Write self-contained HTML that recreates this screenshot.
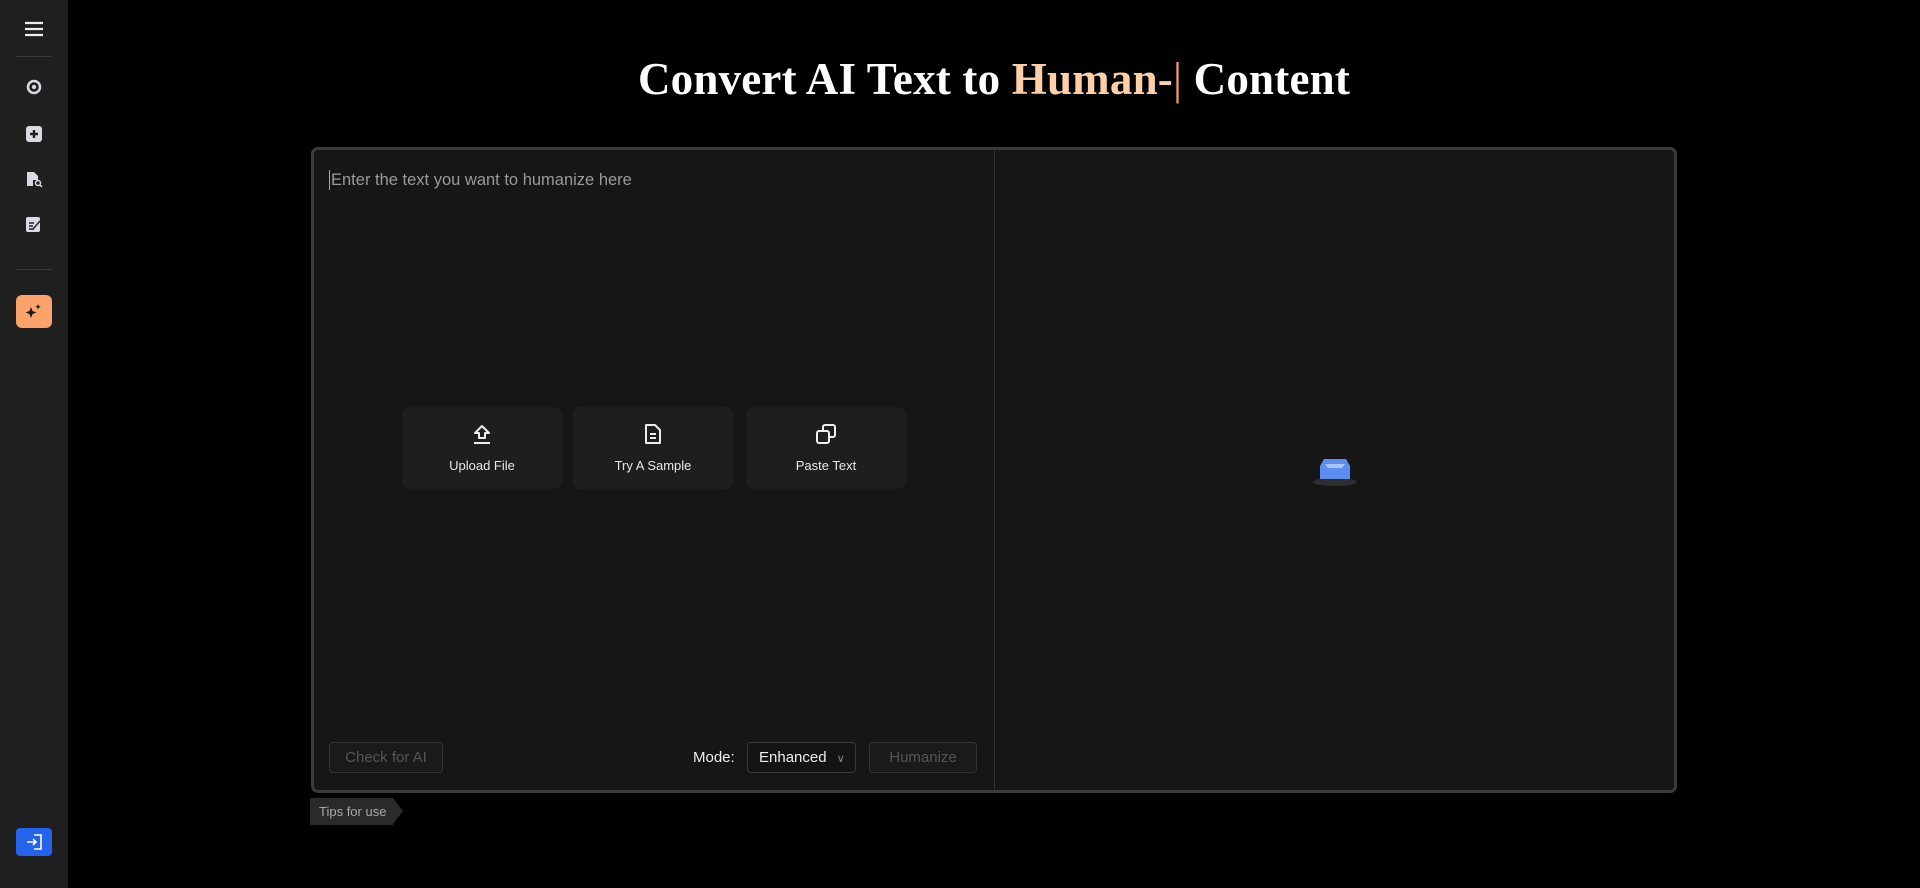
<!DOCTYPE html>
<html><head><meta charset="utf-8"><style>
*{box-sizing:border-box;margin:0;padding:0}
body{width:1920px;height:888px;background:#000;font-family:"Liberation Sans",sans-serif;position:relative;overflow:hidden;color:#fff}
.sb{position:absolute;left:0;top:0;width:68px;height:888px;background:#1f1f1f}
.hr{position:absolute;left:16px;width:36px;height:1px;background:#3a3a3a}
.ic{position:absolute;left:24px}
.title{position:absolute;left:0;right:0;padding-left:68px;top:53px;text-align:center;font-family:"Liberation Serif",serif;font-weight:bold;font-size:45px;letter-spacing:0.2px}
.box{position:absolute;left:311px;top:147px;width:1366px;height:646px;border:3px solid #3a3a3a;border-radius:7px;background:#161616}
.div{position:absolute;left:680px;top:0;width:1px;height:100%;background:#333}
.ph{position:absolute;left:15px;top:20px;font-size:16.5px;color:#9a9a9a;border-left:1px solid #aaa;padding-left:1px;line-height:20px}
.card{position:absolute;top:257px;width:160px;height:82px;background:#1e1e1e;border-radius:8px;text-align:center;font-size:13px;color:#e8e8e8}
.card svg{margin-top:16px}
.card div{margin-top:10px}
.btn{position:absolute;top:592px;height:31px;border:1px solid #333;border-radius:4px;color:#555;font-size:15px;line-height:29px;text-align:center;background:#1a1a1a}
</style></head><body>
<div class="sb">
<svg class="ic" style="top:20px;left:24px" width="20" height="18" viewBox="0 0 20 18"><path d="M1 3h18M1 9h18M1 15h18" stroke="#eee" stroke-width="2.2"/></svg>
<div class="hr" style="top:56px"></div>
<svg class="ic" style="top:79px;left:26px" width="16" height="16" viewBox="0 0 16 16"><circle cx="8" cy="8" r="6" fill="none" stroke="#d8dbe2" stroke-width="2.5"/><circle cx="8" cy="8" r="2.2" fill="#d8dbe2"/></svg>
<svg class="ic" style="top:126px;left:26px" width="16" height="16" viewBox="0 0 16 16"><rect width="16" height="16" rx="3" fill="#d8dbe2"/><path d="M8 4v8M4 8h8" stroke="#1f1f1f" stroke-width="2.4"/></svg>
<svg class="ic" style="top:171px;left:26px" width="17" height="17" viewBox="0 0 17 17"><path d="M1 1h7l4 4v4H1z" fill="#d8dbe2"/><path d="M1 9h6v6H1z" fill="#d8dbe2"/><circle cx="12" cy="12" r="2.5" fill="none" stroke="#d8dbe2" stroke-width="1.5"/><path d="M14 14l2 2" stroke="#d8dbe2" stroke-width="1.5"/></svg>
<svg class="ic" style="top:217px;left:26px" width="16" height="16" viewBox="0 0 16 16"><rect width="14" height="15" rx="2" fill="#d8dbe2"/><path d="M3 6h5M3 9h4M3 12h5M7 12l7-8" stroke="#1f1f1f" stroke-width="1.4"/></svg>
<div class="hr" style="top:269px"></div>
<div style="position:absolute;left:16px;top:295px;width:36px;height:33px;background:#fba36a;border-radius:6px"><svg style="position:absolute;left:9px;top:8px" width="18" height="18" viewBox="0 0 18 18"><path d="M6 4l1.5 4 4 1.5-4 1.5L6 15l-1.5-4L.5 9.5l4-1.5zM13 1l.8 2 2 .8-2 .8-.8 2-.8-2-2-.8 2-.8z" fill="#1a1a1a"/></svg></div>
<div style="position:absolute;left:16px;top:828px;width:36px;height:28px;background:#2563eb;border-radius:4px"><svg style="position:absolute;left:10px;top:6px" width="17" height="16" viewBox="0 0 17 16"><path d="M8 1h7v14H8M1 8h9M7 5l3 3-3 3" fill="none" stroke="#fff" stroke-width="1.6"/></svg></div>
</div>
<div class="title">Convert AI Text to <span style="color:#fdd0a8">Human-</span><span style="color:#f59b6a;font-weight:normal">|</span> Content</div>
<div class="box">
<div class="div"></div>
<div class="ph">Enter the text you want to humanize here</div>
<div class="card" style="left:88px"><svg width="22" height="22" viewBox="0 0 22 22"><path d="M11 3l-7 7h4v5h6v-5h4z" fill="none" stroke="#eee" stroke-width="2" stroke-linejoin="round"/><path d="M3 20h16" stroke="#eee" stroke-width="2"/></svg><div>Upload File</div></div>
<div class="card" style="left:259px"><svg width="22" height="22" viewBox="0 0 22 22"><path d="M4 2h9l5 5v13H4z" fill="none" stroke="#eee" stroke-width="2" stroke-linejoin="round"/><path d="M8 11h6M8 15h6" stroke="#eee" stroke-width="2"/></svg><div>Try A Sample</div></div>
<div class="card" style="left:432px"><svg width="22" height="22" viewBox="0 0 22 22"><rect x="2" y="8" width="12" height="12" rx="2" fill="none" stroke="#eee" stroke-width="2"/><path d="M8 8V4a2 2 0 0 1 2-2h8a2 2 0 0 1 2 2v8a2 2 0 0 1-2 2h-4" fill="none" stroke="#eee" stroke-width="2"/></svg><div>Paste Text</div></div>
<div class="btn" style="left:15px;width:114px">Check for AI</div>
<div style="position:absolute;left:379px;top:599px;font-size:15px;color:#eee">Mode:</div>
<div style="position:absolute;left:433px;top:592px;width:109px;height:31px;border:1px solid #3a3a3a;border-radius:4px;background:#141414;font-size:15px;line-height:29px;padding-left:11px;color:#eee">Enhanced <span style="color:#888;font-size:11px;margin-left:6px">&#8744;</span></div>
<div class="btn" style="left:555px;width:108px">Humanize</div>
<svg style="position:absolute;left:997px;top:306px" width="48" height="32" viewBox="0 0 48 32"><ellipse cx="24" cy="26" rx="22" ry="4" fill="#2e2e2e"/><path d="M9 10l4-7h22l4 7v13H9z" fill="#5b8ef0"/><path d="M14 8h20l-3 4H17z" fill="#a9c4fb"/></svg>
</div>
<div style="position:absolute;left:310px;top:798px;width:83px;height:27px;background:#2a2a2a;font-size:13px;color:#aaa;line-height:27px;padding-left:9px">Tips for use</div>
<div style="position:absolute;left:393px;top:798px;width:0;height:0;border-top:13.5px solid transparent;border-bottom:13.5px solid transparent;border-left:10px solid #2a2a2a"></div>
</body></html>
